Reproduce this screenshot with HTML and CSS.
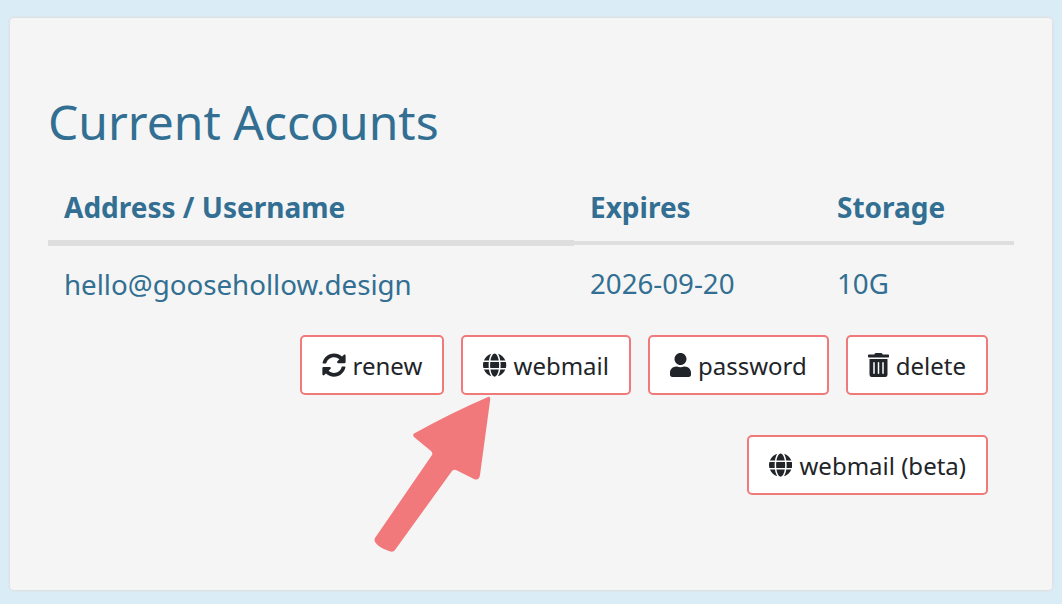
FILE: index.html
```html
<!DOCTYPE html>
<html lang="en">
<head>
  <meta charset="UTF-8">
  <title>Current Accounts</title>
  <link rel="stylesheet" href="styles.css">
</head>
<body>
  <main class="card">
    <h1>Current Accounts</h1>
    <table>
      <thead>
        <tr>
          <th class="col-address">Address / Username</th>
          <th class="col-expires">Expires</th>
          <th>Storage</th>
        </tr>
      </thead>
      <tbody>
        <tr>
          <td>hello@goosehollow.design</td>
          <td>2026-09-20</td>
          <td>10G</td>
        </tr>
      </tbody>
    </table>

    <div class="actions">
      <div class="actions-row">
        <a href="#" class="btn">
          <svg class="icon" viewBox="0 0 512 512"><path d="M370.72 133.28C339.458 104.008 298.888 87.962 255.848 88c-77.458.068-144.328 53.178-162.791 126.85-1.344 5.363-6.122 9.15-11.651 9.15H24.103c-7.498 0-13.194-6.807-11.807-14.176C33.933 94.924 134.813 8 256 8c66.448 0 126.791 26.136 171.315 68.685L463.03 40.97C478.149 25.851 504 36.559 504 57.941V192c0 13.255-10.745 24-24 24H345.941c-21.382 0-32.09-25.851-16.971-40.971l41.75-41.749zM32 296h134.059c21.382 0 32.09 25.851 16.971 40.971l-41.75 41.75c31.262 29.273 71.835 45.319 114.876 45.28 77.418-.07 144.315-53.144 162.787-126.849 1.344-5.363 6.122-9.15 11.651-9.15h57.304c7.498 0 13.194 6.807 11.807 14.176C478.067 417.076 377.187 504 256 504c-66.448 0-126.791-26.136-171.315-68.685L48.97 471.03C33.851 486.149 8 475.441 8 454.059V320c0-13.255 10.745-24 24-24z"/></svg>
          renew
        </a>
        <a href="#" class="btn">
          <svg class="icon" viewBox="0 0 496 512"><path d="M336.5 160C322 70.7 287.8 8 248 8s-74 62.7-88.5 152h177zM152 256c0 22.2 1.2 43.5 3.3 64h185.3c2.1-20.5 3.3-41.8 3.3-64s-1.2-43.5-3.3-64H155.3c-2.1 20.5-3.3 41.8-3.3 64zm324.7-96c-28.6-67.9-86.5-120.4-158-141.6 24.4 33.8 41.2 84.7 50 141.6h108zM177.2 18.4C105.8 39.6 47.8 92.1 19.3 160h108c8.7-56.9 25.5-107.8 49.9-141.6zM487.4 192H372.7c2.1 21 3.3 42.5 3.3 64s-1.2 43-3.3 64h114.6c5.5-20.5 8.6-41.8 8.6-64s-3.1-43.5-8.5-64zM120 256c0-21.5 1.2-43 3.3-64H8.6C3.2 212.5 0 233.8 0 256s3.2 43.5 8.6 64h114.6c-2-21-3.2-42.5-3.2-64zm39.5 96c14.5 89.3 48.7 152 88.5 152s74-62.7 88.5-152h-177zm159.3 141.6c71.4-21.2 129.4-73.7 158-141.6h-108c-8.8 56.9-25.6 107.8-50 141.6zM19.3 352c28.6 67.9 86.5 120.4 158 141.6-24.4-33.8-41.2-84.7-50-141.6h-108z"/></svg>
          webmail
        </a>
        <a href="#" class="btn">
          <svg class="icon" viewBox="0 0 448 512"><path d="M224 256c70.7 0 128-57.3 128-128S294.7 0 224 0 96 57.3 96 128s57.3 128 128 128zm89.6 32h-16.7c-22.2 10.2-46.9 16-72.9 16s-50.6-5.8-72.9-16h-16.7C60.2 288 0 348.2 0 422.4V464c0 26.5 21.5 48 48 48h352c26.5 0 48-21.5 48-48v-41.6c0-74.2-60.2-134.4-134.4-134.4z"/></svg>
          password
        </a>
        <a href="#" class="btn">
          <svg class="icon" viewBox="0 0 448 512"><path d="M32 464a48 48 0 0 0 48 48h288a48 48 0 0 0 48-48V128H32zm272-256a16 16 0 0 1 32 0v224a16 16 0 0 1-32 0zm-96 0a16 16 0 0 1 32 0v224a16 16 0 0 1-32 0zm-96 0a16 16 0 0 1 32 0v224a16 16 0 0 1-32 0zM432 32H312l-9.4-18.7A24 24 0 0 0 281.1 0H166.8a23.72 23.72 0 0 0-21.4 13.3L136 32H16A16 16 0 0 0 0 48v32a16 16 0 0 0 16 16h416a16 16 0 0 0 16-16V48a16 16 0 0 0-16-16z"/></svg>
          delete
        </a>
      </div>
      <div class="actions-row">
        <a href="#" class="btn">
          <svg class="icon" viewBox="0 0 496 512"><path d="M336.5 160C322 70.7 287.8 8 248 8s-74 62.7-88.5 152h177zM152 256c0 22.2 1.2 43.5 3.3 64h185.3c2.1-20.5 3.3-41.8 3.3-64s-1.2-43.5-3.3-64H155.3c-2.1 20.5-3.3 41.8-3.3 64zm324.7-96c-28.6-67.9-86.5-120.4-158-141.6 24.4 33.8 41.2 84.7 50 141.6h108zM177.2 18.4C105.8 39.6 47.8 92.1 19.3 160h108c8.7-56.9 25.5-107.8 49.9-141.6zM487.4 192H372.7c2.1 21 3.3 42.5 3.3 64s-1.2 43-3.3 64h114.6c5.5-20.5 8.6-41.8 8.6-64s-3.1-43.5-8.5-64zM120 256c0-21.5 1.2-43 3.3-64H8.6C3.2 212.5 0 233.8 0 256s3.2 43.5 8.6 64h114.6c-2-21-3.2-42.5-3.2-64zm39.5 96c14.5 89.3 48.7 152 88.5 152s74-62.7 88.5-152h-177zm159.3 141.6c71.4-21.2 129.4-73.7 158-141.6h-108c-8.8 56.9-25.6 107.8-50 141.6zM19.3 352c28.6 67.9 86.5 120.4 158 141.6-24.4-33.8-41.2-84.7-50-141.6h-108z"/></svg>
          webmail (beta)
        </a>
      </div>
    </div>

    <!-- annotation arrow pointing at webmail -->
    <svg class="arrow" viewBox="0 0 130 170">
      <path d="M127 4 Q130 3 129 8 L119 82 Q118 88 113 86 L95 77 Q93 76 91 78 L34 157 Q32 160 28 158 Q18 155 14 149 Q13 147 14 145 L71 62 Q72 60 70 58 L53 44 Q51 41 54 40 Q90 20 127 4 Z"/>
    </svg>
  </main>
</body>
</html>
```

FILE: styles.css
```css
* {
  margin: 0;
  padding: 0;
  box-sizing: border-box;
}

body {
  font-family: "Noto Sans", "Open Sans", sans-serif;
  background-color: #daedf6;
  color: #212529;
  padding: 18px 10px 14px;
  height: 604px;
  overflow: hidden;
}

/* Card */
.card {
  position: relative;
  height: 572px;
  background: #f5f5f5;
  border-radius: 4px;
  box-shadow: 0 0 3px 1px #dedede;
  padding: 74px 38px 0;
}

h1 {
  font-size: 48px;
  font-weight: 400;
  line-height: 60px;
  color: #326f92;
}

/* Table */
table {
  width: 966px;
  border-collapse: collapse;
  table-layout: fixed;
  margin-top: 21px;
  color: #326f92;
}

th, td {
  text-align: left;
  padding: 0 16px;
}

th {
  font-size: 28px;
  font-weight: 700;
  height: 70px;
  border-bottom: 4px solid #dedede;
}

th.col-address {
  width: 526px;
  border-bottom-width: 6px;
}

th.col-expires {
  width: 247px;
}

td {
  font-size: 27.7px;
  height: 78px;
}

/* Buttons */
.actions {
  display: flex;
  flex-direction: column;
  gap: 40px;
  margin-top: 14px;
  padding-right: 26px;
}

.actions-row {
  display: flex;
  justify-content: flex-end;
  gap: 17px;
}

.btn {
  display: inline-flex;
  align-items: center;
  gap: 7px;
  height: 60px;
  padding: 0 20px;
  background: #fff;
  border: 2px solid #f07a7a;
  border-radius: 5px;
  font-size: 24px;
  color: #212529;
  text-decoration: none;
}

.icon {
  height: 24px;
  fill: #212529;
}

/* Arrow */
.arrow {
  position: absolute;
  left: 351px;
  top: 375px;
  width: 130px;
  height: 170px;
  fill: #f2797b;
}
```
